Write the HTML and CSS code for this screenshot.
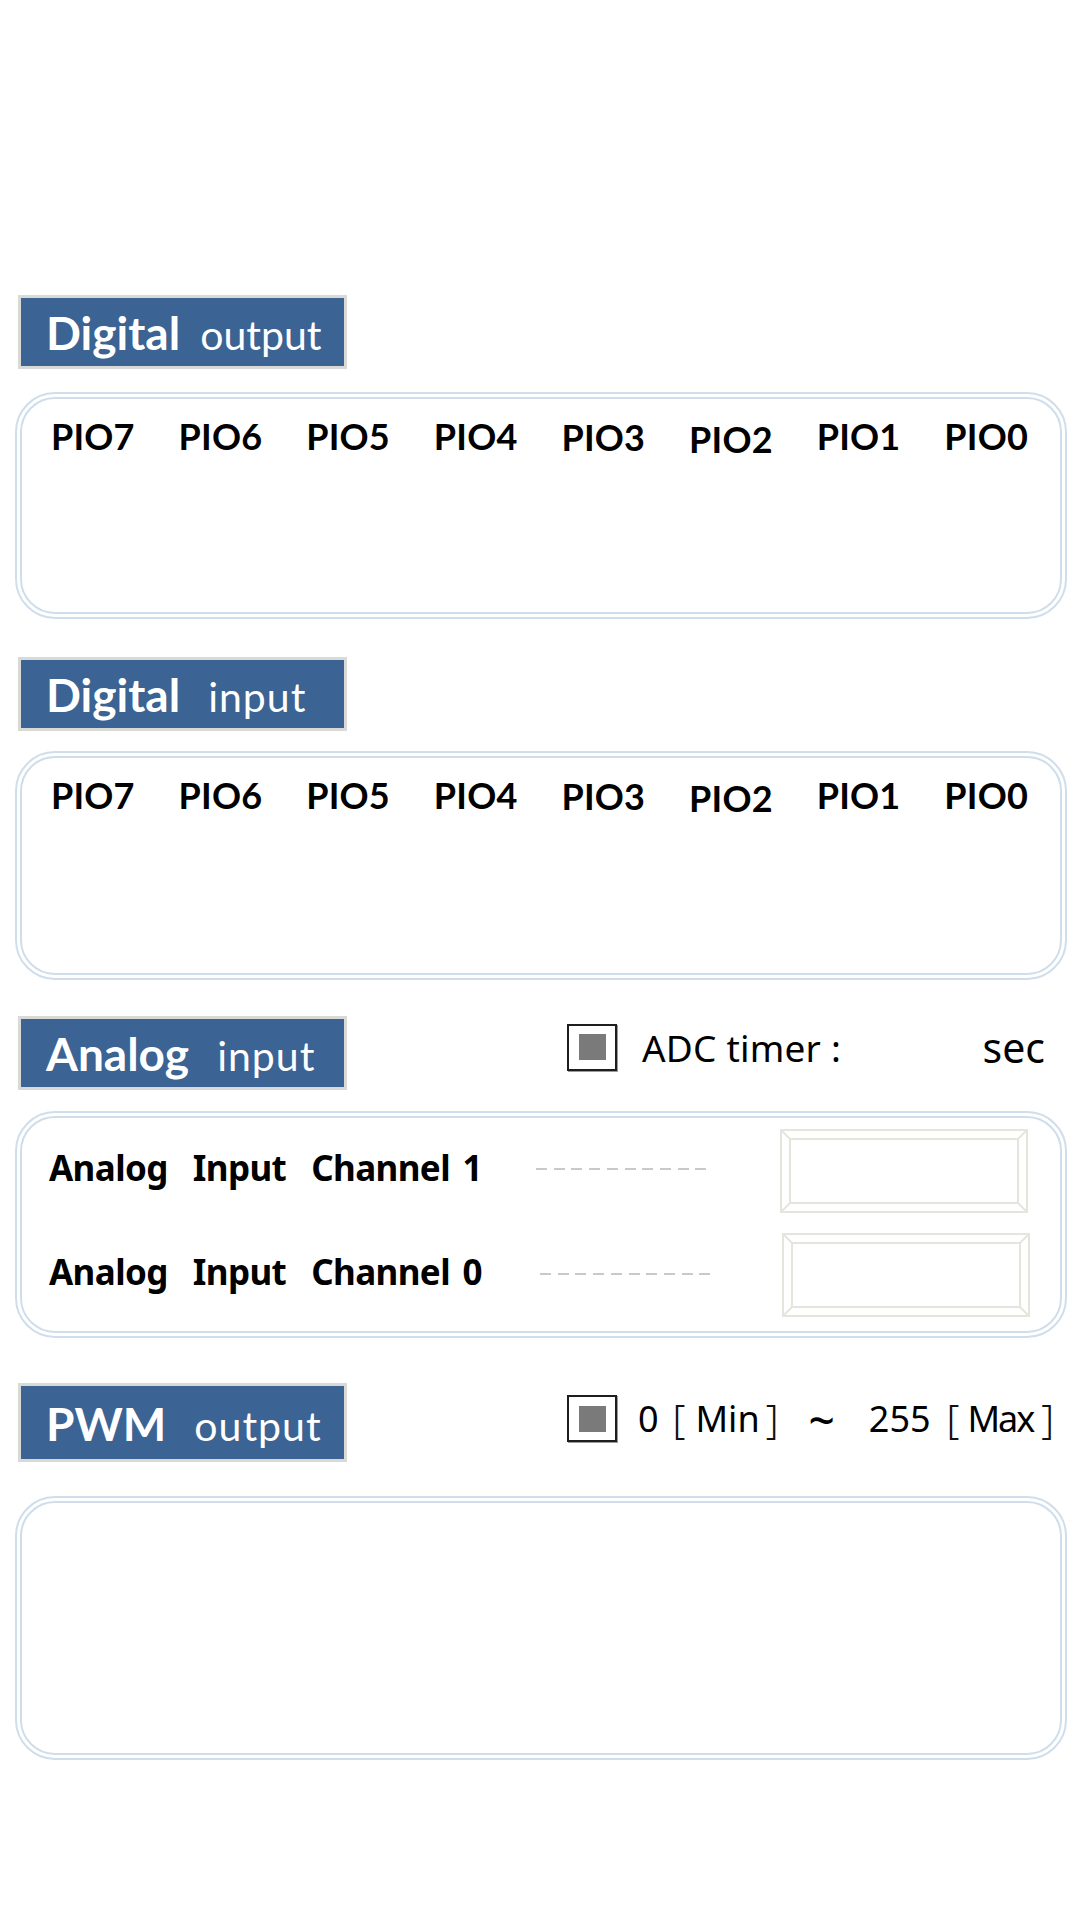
FILE: index.html
```html
<!DOCTYPE html>
<html lang="en">
<head>
<meta charset="utf-8">
<title>IO Panel</title>
<link rel="stylesheet" href="styles.css">
</head>
<body>
<main class="page">
  <section class="section sec-do">
    <div class="head-row">
      <h2 class="tag"><b>Digital</b><span>output</span></h2>
    </div>
    <div class="card card-pio">
      <div class="pio-grid">
        <span class="pio">PIO7</span><span class="pio">PIO6</span><span class="pio">PIO5</span><span class="pio">PIO4</span>
        <span class="pio pio-3">PIO3</span><span class="pio pio-2">PIO2</span><span class="pio">PIO1</span><span class="pio">PIO0</span>
      </div>
    </div>
  </section>

  <section class="section sec-di">
    <div class="head-row">
      <h2 class="tag"><b>Digital</b><span class="wide">input</span></h2>
    </div>
    <div class="card card-pio card-di">
      <div class="pio-grid">
        <span class="pio">PIO7</span><span class="pio">PIO6</span><span class="pio">PIO5</span><span class="pio">PIO4</span>
        <span class="pio pio-3">PIO3</span><span class="pio pio-2">PIO2</span><span class="pio">PIO1</span><span class="pio">PIO0</span>
      </div>
    </div>
  </section>

  <section class="section sec-ai">
    <div class="head-row">
      <h2 class="tag"><b>Analog</b><span class="wide">input</span></h2>
      <div class="controls adc">
        <span class="check"><span class="check-fill"></span></span>
        <span class="ctl-text">ADC timer :</span>
        <span class="sec">sec</span>
      </div>
    </div>
    <div class="card card-ai">
      <div class="ai-row">
        <span class="ai-label">Analog  Input  Channel 1</span>
        <span class="dashes"></span>
        <span class="value-box">
          <svg viewBox="0 0 248 84" preserveAspectRatio="none" aria-hidden="true">
            <rect x="1" y="1" width="246" height="82" />
            <rect x="10" y="10" width="228" height="64" />
            <line x1="1" y1="1" x2="10" y2="10" /><line x1="247" y1="1" x2="238" y2="10" />
            <line x1="1" y1="83" x2="10" y2="74" /><line x1="247" y1="83" x2="238" y2="74" />
          </svg>
        </span>
      </div>
      <div class="ai-row">
        <span class="ai-label">Analog  Input  Channel 0</span>
        <span class="dashes dashes-2"></span>
        <span class="value-box value-box-2">
          <svg viewBox="0 0 248 84" preserveAspectRatio="none" aria-hidden="true">
            <rect x="1" y="1" width="246" height="82" />
            <rect x="10" y="10" width="228" height="64" />
            <line x1="1" y1="1" x2="10" y2="10" /><line x1="247" y1="1" x2="238" y2="10" />
            <line x1="1" y1="83" x2="10" y2="74" /><line x1="247" y1="83" x2="238" y2="74" />
          </svg>
        </span>
      </div>
    </div>
  </section>

  <section class="section sec-pwm">
    <div class="head-row">
      <h2 class="tag tag-tall"><b>PWM</b><span class="wide">output</span></h2>
      <div class="controls pwm">
        <span class="check"><span class="check-fill"></span></span>
        <span class="num n0">0</span>
        <span class="br">[</span>
        <span class="word">Min</span>
        <span class="br br-close">]</span>
        <span class="tilde">~</span>
        <span class="num">255</span>
        <span class="br br-open2">[</span>
        <span class="word word-max">Max</span>
        <span class="br br-close2">]</span>
      </div>
    </div>
    <div class="card card-pwm"></div>
  </section>
</main>
</body>
</html>
```

FILE: styles.css
```css
* { box-sizing: border-box; }

html, body {
  margin: 0;
  padding: 0;
  background: #ffffff;
}

body {
  width: 1080px;
  height: 1920px;
  font-family: "Noto Sans", "Liberation Sans", sans-serif;
  color: #000;
}

.page {
  padding: 295px 13px 0 15px;
}

.section { display: block; }
.sec-di { margin-top: 38px; }
.sec-ai { margin-top: 36px; }
.sec-pwm { margin-top: 45px; }

.head-row {
  display: flex;
  align-items: center;
  padding-right: 22px;
}

.tag {
  margin: 0 0 0 3px;
  width: 329px;
  height: 74px;
  background: #3b6393;
  border: 3px solid #d9d9d5;
  display: flex;
  align-items: baseline;
  padding: 12px 0 0 25px;
  font-family: "Lato", "Open Sans", sans-serif;
  color: #ffffff;
  line-height: 1;
}

.tag-tall { height: 79px; padding-top: 15px; }

.tag b {
  font-weight: 700;
  font-size: 46px;
}

.tag span {
  font-weight: 400;
  font-size: 41px;
  margin-left: 20px;
  letter-spacing: 0;
}

.tag span.wide {
  margin-left: 28px;
  letter-spacing: 1px;
}

.card {
  margin-top: 23px;
  border: 7px double #cfdeea;
  border-radius: 40px;
  background: #fff;
}

.card-pio {
  height: 227px;
  padding: 19px 10px 0 7px;
}

.card-di {
  margin-top: 20px;
  height: 229px;
}

.pio-grid {
  display: grid;
  grid-template-columns: repeat(8, 1fr);
}

.pio {
  text-align: center;
  font-family: "Lato", "Open Sans", sans-serif;
  font-weight: 700;
  font-size: 36px;
  line-height: 36px;
  letter-spacing: 0.2px;
}

.pio-3 { padding-top: 1px; }
.pio-2 { padding-top: 3px; }

/* Analog */
.controls {
  margin-left: auto;
  display: flex;
  align-items: center;
}

.adc {
  width: 478px;
  margin-bottom: 12px;
}

.check {
  flex: 0 0 auto;
  width: 50px;
  height: 47px;
  border: 2px solid #1e1e1e;
  display: flex;
  align-items: center;
  justify-content: center;
  box-shadow: 1px 1px 0 #9a9a9a;
}

.check-fill {
  width: 27px;
  height: 26px;
  background: #7a7a7a;
}

.ctl-text {
  margin-left: 25px;
  font-size: 37px;
  letter-spacing: 0.2px;
  white-space: pre;
}

.sec {
  margin-left: auto;
  font-size: 41px;
}

.card-ai {
  margin-top: 21px;
  height: 227px;
  padding: 11px 0 0 27px;
  display: flex;
  flex-direction: column;
  gap: 20px;
}

.ai-row {
  display: flex;
  align-items: center;
  height: 84px;
}

.ai-label {
  flex: 0 0 487px;
  font-weight: 700;
  font-size: 35px;
  white-space: pre;
  margin-bottom: 8px;
  letter-spacing: -0.6px;
  word-spacing: 4px;
}

.dashes {
  width: 177px;
  height: 2px;
  margin-bottom: 4px;
  background: repeating-linear-gradient(to right, #c9c9c9 0 11px, transparent 11px 17.7px);
}

.dashes-2 { margin-left: 4px; margin-bottom: 2px; }

.value-box {
  margin-left: 67px;
  width: 248px;
  height: 84px;
  display: block;
}

.value-box-2 { margin-left: 65px; }

.value-box svg {
  display: block;
  width: 100%;
  height: 100%;
  fill: none;
  stroke: #e4e6de;
  stroke-width: 2;
}

/* PWM */
.pwm {
  width: 478px;
  margin-bottom: 8px;
  font-size: 36px;
  line-height: 1;
}

.num { margin-left: 17px; }
.n0 { margin-left: 21px; }

.br {
  font-size: 40px;
  font-weight: 300;
  margin-left: 14px;
  color: #111;
}

.word { margin-left: 10px; }
.word-max { margin-left: 8px; letter-spacing: -2px; }
.br-close { margin-left: 6px; }
.br-open2 { margin-left: 16px; }
.br-close2 { margin-left: 8px; }

.tilde {
  margin-left: 30px;
  margin-right: 17px;
  font-size: 46px;
  font-weight: 500;
}

.card-pwm {
  margin-top: 34px;
  height: 264px;
}
```
